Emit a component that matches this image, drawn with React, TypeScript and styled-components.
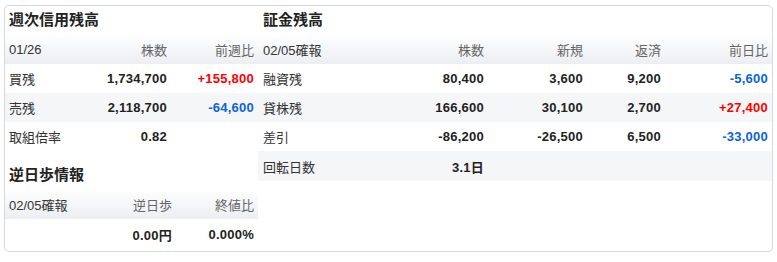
import React from "react";
import styled, { createGlobalStyle } from "styled-components";

const colours = {
    border: "#d3d7de",
    stripe: "#f5f6f8",
    headTop: "#ffffff",
    headBottom: "#eceef2",
    text: "#333333",
    number: "#222222",
    muted: "#666666",
    up: "#ff0000",
    down: "#0a64d8"
};

const GlobalStyle = createGlobalStyle`
  body {
    margin: 0;
    background: #ffffff;
    font-family: "Liberation Sans", "Noto Sans CJK JP", sans-serif;
    color: ${colours.text};
  }
`;

const Frame =
  styled.div`
  margin: 5px 4px 0 4px;
  width: 769px;
  height: 247px;
  box-sizing: border-box;
  border: 1px solid ${colours.border};
  border-radius: 5px;
  display: flex;
  overflow: hidden;
  `;

const Column =
  styled.div<{ width?: number }>`
  display: flex;
  flex-direction: column;
  width: ${props => props.width ? `${props.width}px` : "auto"};
  flex: ${props => props.width ? "none" : "1"};
  `;

const Title =
  styled.h2<{ gap?: number, inset: number }>`
  margin: ${props => props.gap ?? 0}px 0 0 0;
  height: 28px;
  line-height: 28px;
  padding-left: ${props => props.inset}px;
  font-size: 15px;
  font-weight: bold;
  color: #222;
  `;

const Row =
  styled.div<{ cols: string, striped?: boolean, height?: number }>`
  display: grid;
  grid-template-columns: ${props => props.cols};
  height: ${props => props.height ?? 29}px;
  align-items: center;
  background: ${props => props.striped ? colours.stripe : "transparent"};
  font-size: 13px;
  `;

const HeadRow =
  styled(Row)`
  height: 30px;
  background: linear-gradient(${colours.headTop}, ${colours.headBottom});
  `;

const Label =
  styled.span<{ inset: number }>`
  padding-left: ${props => props.inset}px;
  color: ${colours.text};
  white-space: nowrap;
  `;

const HeadCell =
  styled.span`
  text-align: right;
  padding-right: 4px;
  color: ${colours.muted};
  `;

type Tone = "up" | "down" | "plain";

const Value =
  styled.span<{ tone?: Tone }>`
  text-align: right;
  padding-right: 4px;
  font-weight: bold;
  letter-spacing: 0.25px;
  color: ${
    props =>
        props.tone === "up"
            ? colours.up
            : props.tone === "down"
                ? colours.down
                : colours.number };
  `;

const leftCols = "70px 96px 87px";
const lowerCols = "75px 96px 82px";
const rightCols = "130px 100px 99px 78px 107px";

const weekly = [
    { label: "買残", shares: "1,734,700", diff: "+155,800", t: "up" as Tone },
    { label: "売残", shares: "2,118,700", diff: "-64,600", t: "down" as Tone }
];

const margin = [
    { label: "融資残", shares: "80,400", add: "3,600", repay: "9,200", diff: "-5,600", t: "down" as Tone },
    { label: "貸株残", shares: "166,600", add: "30,100", repay: "2,700", diff: "+27,400", t: "up" as Tone },
    { label: "差引", shares: "-86,200", add: "-26,500", repay: "6,500", diff: "-33,000", t: "down" as Tone }
];

const App = () => (
    <>
        <GlobalStyle />
        <Frame>
            <Column width={253}>
                <Title inset={4}>週次信用残高</Title>
                <HeadRow cols={leftCols}>
                    <Label inset={4}>01/26</Label>
                    <HeadCell>株数</HeadCell>
                    <HeadCell>前週比</HeadCell>
                </HeadRow>
                {weekly.map((r, i) => (
                    <Row key={r.label} cols={leftCols} striped={i % 2 === 1}>
                        <Label inset={4}>{r.label}</Label>
                        <Value>{r.shares}</Value>
                        <Value tone={r.t}>{r.diff}</Value>
                    </Row>
                ))}
                <Row cols={leftCols}>
                    <Label inset={4}>取組倍率</Label>
                    <Value>0.82</Value>
                    <span />
                </Row>

                <Title inset={4} gap={10}>逆日歩情報</Title>
                <HeadRow cols={lowerCols}>
                    <Label inset={4}>02/05確報</Label>
                    <HeadCell>逆日歩</HeadCell>
                    <HeadCell>終値比</HeadCell>
                </HeadRow>
                <Row cols={lowerCols} height={30}>
                    <span />
                    <Value>0.00円</Value>
                    <Value>0.000%</Value>
                </Row>
            </Column>

            <Column>
                <Title inset={5}>証金残高</Title>
                <HeadRow cols={rightCols}>
                    <Label inset={5}>02/05確報</Label>
                    <HeadCell>株数</HeadCell>
                    <HeadCell>新規</HeadCell>
                    <HeadCell>返済</HeadCell>
                    <HeadCell>前日比</HeadCell>
                </HeadRow>
                {margin.map((r, i) => (
                    <Row key={r.label} cols={rightCols} striped={i % 2 === 1}>
                        <Label inset={5}>{r.label}</Label>
                        <Value>{r.shares}</Value>
                        <Value>{r.add}</Value>
                        <Value>{r.repay}</Value>
                        <Value tone={r.t}>{r.diff}</Value>
                    </Row>
                ))}
                <Row cols={rightCols} striped height={30}>
                    <Label inset={5}>回転日数</Label>
                    <Value>3.1日</Value>
                </Row>
            </Column>
        </Frame>
    </>
);

export default App;
